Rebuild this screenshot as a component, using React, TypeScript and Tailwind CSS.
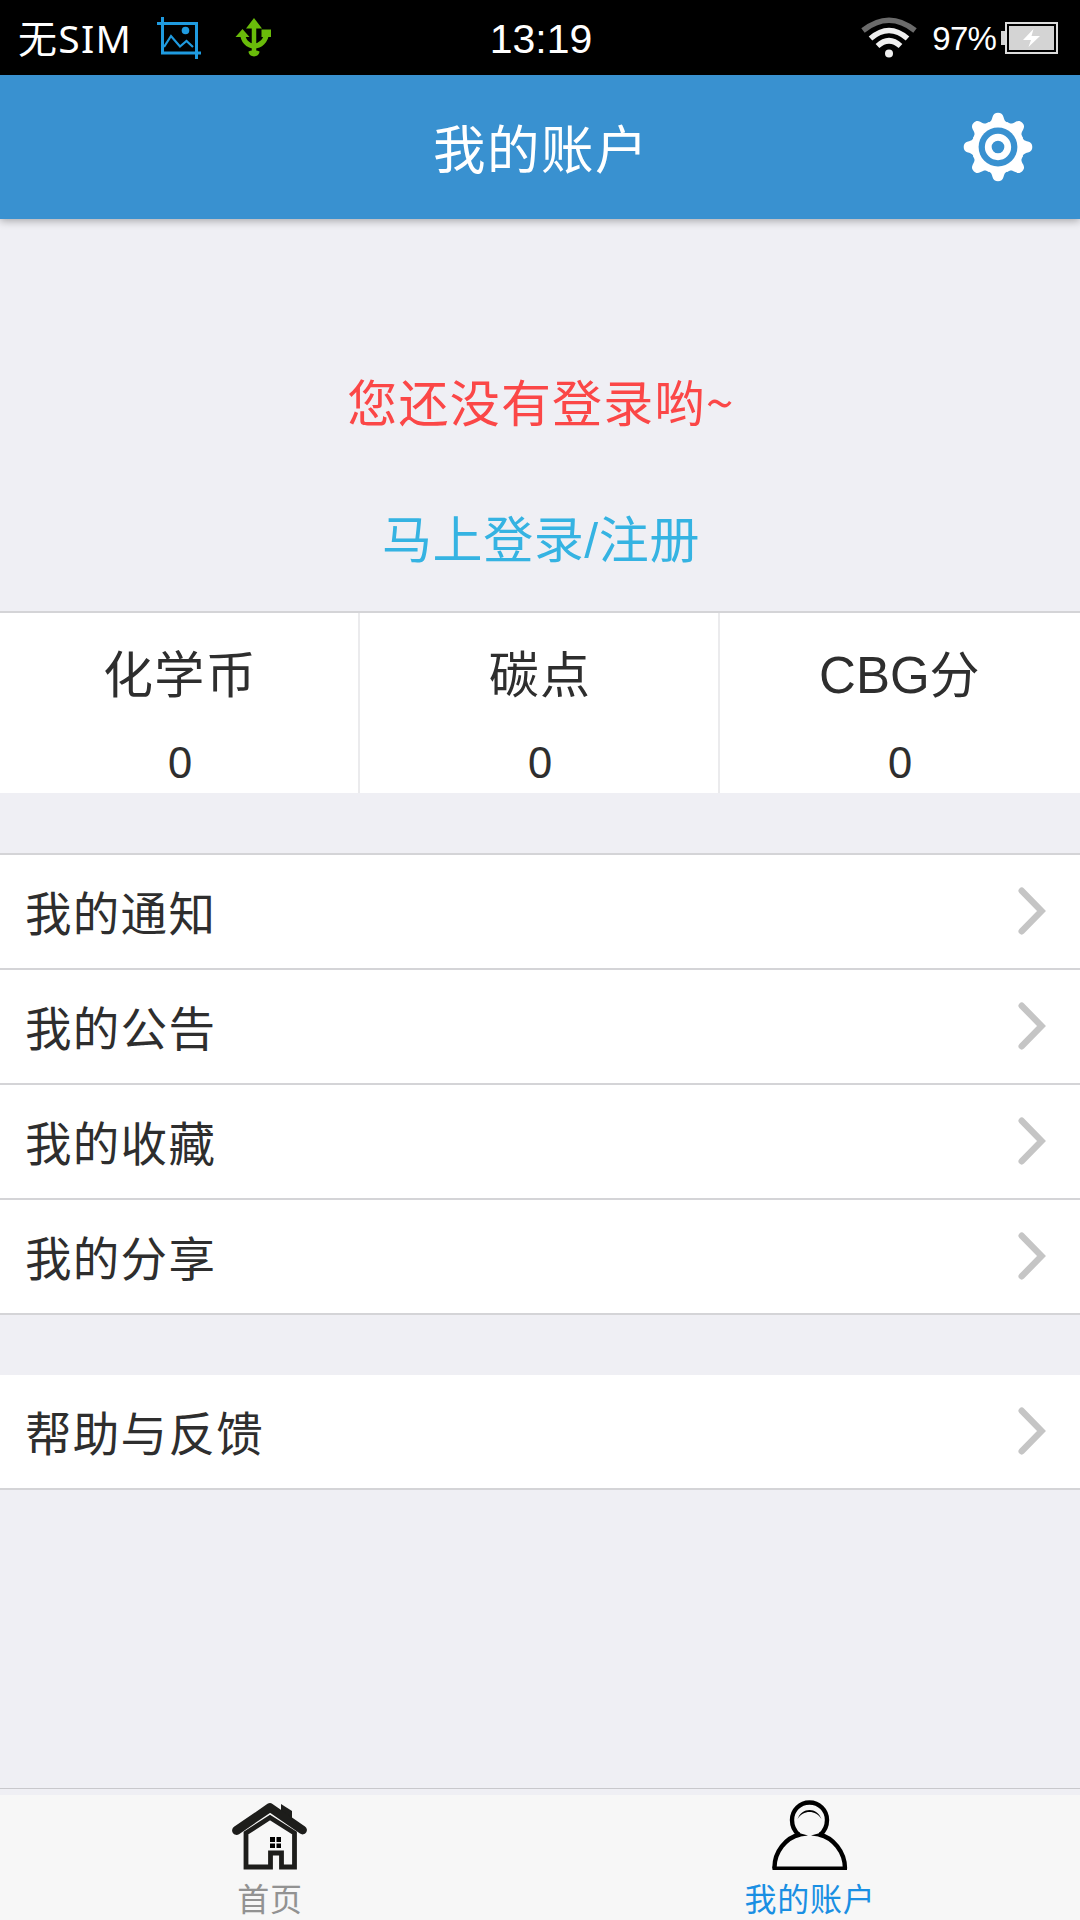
import React from "react";

const stats = [
  { latin: "", label: "化学币", value: "0" },
  { latin: "", label: "碳点", value: "0" },
  { latin: "CBG", label: "分", value: "0" },
];

const rows = ["我的通知", "我的公告", "我的收藏", "我的分享"];

function CropIcon() {
  return (
    <svg className="ml-[24px] h-[42px] w-[46px]" viewBox="0 0 46 42" fill="none" stroke="#1f9be0">
      <path d="M5.500 0V36H44M0 6.500H39.500V42" strokeWidth="3" />
      <path d="M7 30L14 19L23 29.500L29.500 24L36 30" strokeWidth="2.200" />
      <circle cx="28.500" cy="13.500" r="3.800" fill="#1f9be0" stroke="none" />
    </svg>
  );
}

function UsbIcon() {
  return (
    <svg className="ml-[32px] h-[40px] w-[38px]" viewBox="0 0 38 40" fill="none" stroke="#69bb0a">
      <path d="M19 8V34" strokeWidth="4.500" />
      <path d="M7.500 14C7.500 23 13 28 19 28S31.500 23 31.500 14" strokeWidth="5" />
      <path d="M19 0L27 10.500H11ZM7.500 11L14.500 19H0.500ZM26.500 11.500H36V19H26.500Z" fill="#69bb0a" stroke="none" />
      <path d="M13.500 33.500C14 32 24 32 24.500 33.500C24 40 14 40 13.500 33.500Z" fill="#69bb0a" stroke="none" />
    </svg>
  );
}

function WifiIcon() {
  return (
    <svg className="mr-px h-[42px] w-[56px]" viewBox="0 0 56 42" fill="none" stroke="#f0f0f0" strokeWidth="5.500">
      <path d="M2 13.500Q28 -7 54 13.500" stroke="#6b6b6b" />
      <path d="M9.500 21.500Q28 5.500 46.500 21.500" />
      <path d="M16.500 29Q28 18.500 39.500 29" />
      <circle cx="28" cy="36.500" r="4" fill="#f0f0f0" stroke="none" />
    </svg>
  );
}

function BatteryIcon() {
  return (
    <svg className="ml-[5px] h-[32px] w-[58px]" viewBox="0 0 58 32">
      <path d="M0 9H4V23H0Z" fill="#d4d4d4" />
      <path d="M5 1H56V31H5Z" fill="none" stroke="#dcdcdc" strokeWidth="2" />
      <path d="M8 4H53V28H8Z" fill="#d4d4d4" />
      <path d="M32.500 7L22 18H30L27.500 25L39 14H30.500Z" fill="#fff" />
    </svg>
  );
}

function GearIcon() {
  return (
    <svg className="h-[70px] w-[70px]" viewBox="-35 -35 70 70">
      <g fill="#fff">
        {[0, 45, 90, 135, 180, 225, 270, 315].map((a) => (
          <path
            key={a}
            transform={`rotate(${a})`}
            d="M-11 -24C-7 -25 -6.500 -26.500 -5.500 -30C-4.500 -33 -3 -34.300 0 -34.300S4.500 -33 5.500 -30C6.500 -26.500 7 -25 11 -24L8 -15H-8Z"
          />
        ))}
      </g>
      <circle r="22.700" fill="none" stroke="#fff" strokeWidth="7" />
      <circle r="19.400" fill="#3991d0" />
      <circle r="9.750" fill="none" stroke="#fff" strokeWidth="6.800" />
    </svg>
  );
}

function Chevron() {
  return (
    <svg className="mb-[2px] h-[50px] w-[28px]" viewBox="0 0 28 50" fill="none" stroke="#c5c5c5" strokeWidth="6.400" strokeLinecap="round">
      <path d="M3.700 4.700L23.500 25L3.700 45.300" strokeLinejoin="miter" />
    </svg>
  );
}

function HomeIcon() {
  return (
    <svg className="h-[68px] w-[76px]" viewBox="0 0 76 68" fill="none" stroke="#1d1d1b">
      <path d="M49 14V2L60 9V22Z" fill="#1d1d1b" stroke="none" />
      <path d="M4.500 28.500L38 5.500L70.500 28" strokeWidth="8.800" strokeLinecap="round" strokeLinejoin="round" />
      <path d="M14 65V31L38 15.500L62.500 31V65H49.500V51H38.500V65Z" strokeWidth="4.800" />
      <path d="M38 35H43V40H38ZM44.500 35H49V40H44.500ZM38 41.500H43V46H38ZM44.500 41.500H49V46H44.500Z" fill="#000" stroke="none" />
    </svg>
  );
}

function UserIcon() {
  return (
    <svg className="h-[70px] w-[76px]" viewBox="0 0 76 70" fill="none" stroke="#000" strokeWidth="4.400">
      <path d="M27 35C21 30 20 25 20 20C20 10 28 2.500 37.500 2.500S55 10 55 20C55 25 54 30 48 35" />
      <path d="M2.500 68.500C2 52 14 37.500 28 34.500M47 34.500C61 37.500 73 52 73 68.500" />
      <path d="M0.500 68.300H75" strokeWidth="3.400" />
      <path d="M27 33L36 35.500L25 37ZM48 33L39 35.500L50 37Z" fill="#000" stroke="none" />
      <path d="M25.500 19C30 7 45 7 49.500 19C44 9.500 31 9.500 25.500 19Z" fill="#000" stroke="none" />
    </svg>
  );
}

function Row({ label }: { label: string }) {
  return (
    <li className="flex h-[115px] items-center justify-between border-b-2 border-[#d4d4d7] bg-white pr-[34px] pl-[25px]">
      <span className="pt-[7px] text-[46.500px] leading-[60px] tracking-[1.300px] text-[#2e2e2e]">{label}</span>
      <Chevron />
    </li>
  );
}

export default function App() {
  return (
    <div className="flex h-[1920px] w-[1080px] flex-col overflow-hidden bg-[#efeff4] font-['Liberation_Sans','Noto_Sans_CJK_SC',sans-serif] whitespace-nowrap">
      <div className="grid h-[75px] shrink-0 grid-cols-3 items-center bg-black text-white">
        <div className="flex items-center pl-[18px]">
          <span className="w-[115px] font-['Noto_Sans','Noto_Sans_CJK_SC',sans-serif] text-[39px] leading-[50px] tracking-[1.300px]">无SIM</span>
          <CropIcon />
          <UsbIcon />
        </div>
        <div className="pt-[3px] pl-[2px] text-center text-[41px] leading-[50px]">13:19</div>
        <div className="flex items-center justify-end pr-[21px]">
          <WifiIcon />
          <span className="ml-[14px] pt-[3px] text-[33px] leading-[50px] tracking-[-0.800px]">97%</span>
          <BatteryIcon />
        </div>
      </div>

      <header className="z-10 grid h-[144px] shrink-0 grid-cols-[1fr_auto_1fr] items-center bg-[#3991d0] shadow-[0_2px_8px_rgba(0,0,0,0.3)]">
        <h1 className="col-start-2 pt-[8px] pl-[2px] text-[52.500px] leading-[70px] tracking-[1.500px] text-white">我的账户</h1>
        <div className="justify-self-end pr-[47px]">
          <GearIcon />
        </div>
      </header>

      <section className="flex h-[392px] shrink-0 flex-col items-center pt-[151px]">
        <p className="pl-[2px] text-[50px] leading-[70px] tracking-[1.200px] text-[#fb4747]">
          您还没有登录哟<span className="font-['Noto_Sans_CJK_SC',sans-serif] leading-none">~</span>
        </p>
        <a className="mt-[66px] pl-[2px] text-[50px] leading-[70px] tracking-[0.600px] text-[#35b3e2]">马上登录/注册</a>
      </section>

      <section className="grid h-[182px] shrink-0 grid-cols-3 border-t-2 border-[#d4d4d7] bg-white text-[#2e2e2e]">
        {stats.map((s) => (
          <div key={s.label} className="flex flex-col items-center border-r-2 border-[#ebebed] pt-[28px] pl-[2px] last:border-r-0 last:pl-0">
            <span className="text-[50px] leading-[70px] tracking-[1.300px]">
              {s.latin && <span className="text-[51px] tracking-normal">{s.latin}</span>}
              {s.label}
            </span>
            <span className="mt-[20px] font-['Noto_Sans',sans-serif] text-[44px] leading-[60px]">{s.value}</span>
          </div>
        ))}
      </section>

      <ul className="mt-[60px] shrink-0 border-t-2 border-[#d4d4d7]">
        {rows.map((r) => (
          <Row key={r} label={r} />
        ))}
      </ul>
      <ul className="mt-[60px] shrink-0">
        <Row label="帮助与反馈" />
      </ul>

      <nav className="mt-auto flex h-[132px] shrink-0 flex-col border-t border-[#c8c8cc] pt-[6px]">
        <div className="grid flex-1 grid-cols-2 bg-[#f7f7f7]">
          <div className="flex flex-col items-center pt-[7px] text-[#929292]">
            <HomeIcon />
            <span className="mt-[10px] text-[32px] leading-[40px] tracking-[0.800px]">首页</span>
          </div>
          <div className="flex flex-col items-center pt-[5px] text-[#1a8fe3]">
            <UserIcon />
            <span className="mt-[10px] text-[32px] leading-[40px] tracking-[0.800px]">我的账户</span>
          </div>
        </div>
      </nav>
    </div>
  );
}
